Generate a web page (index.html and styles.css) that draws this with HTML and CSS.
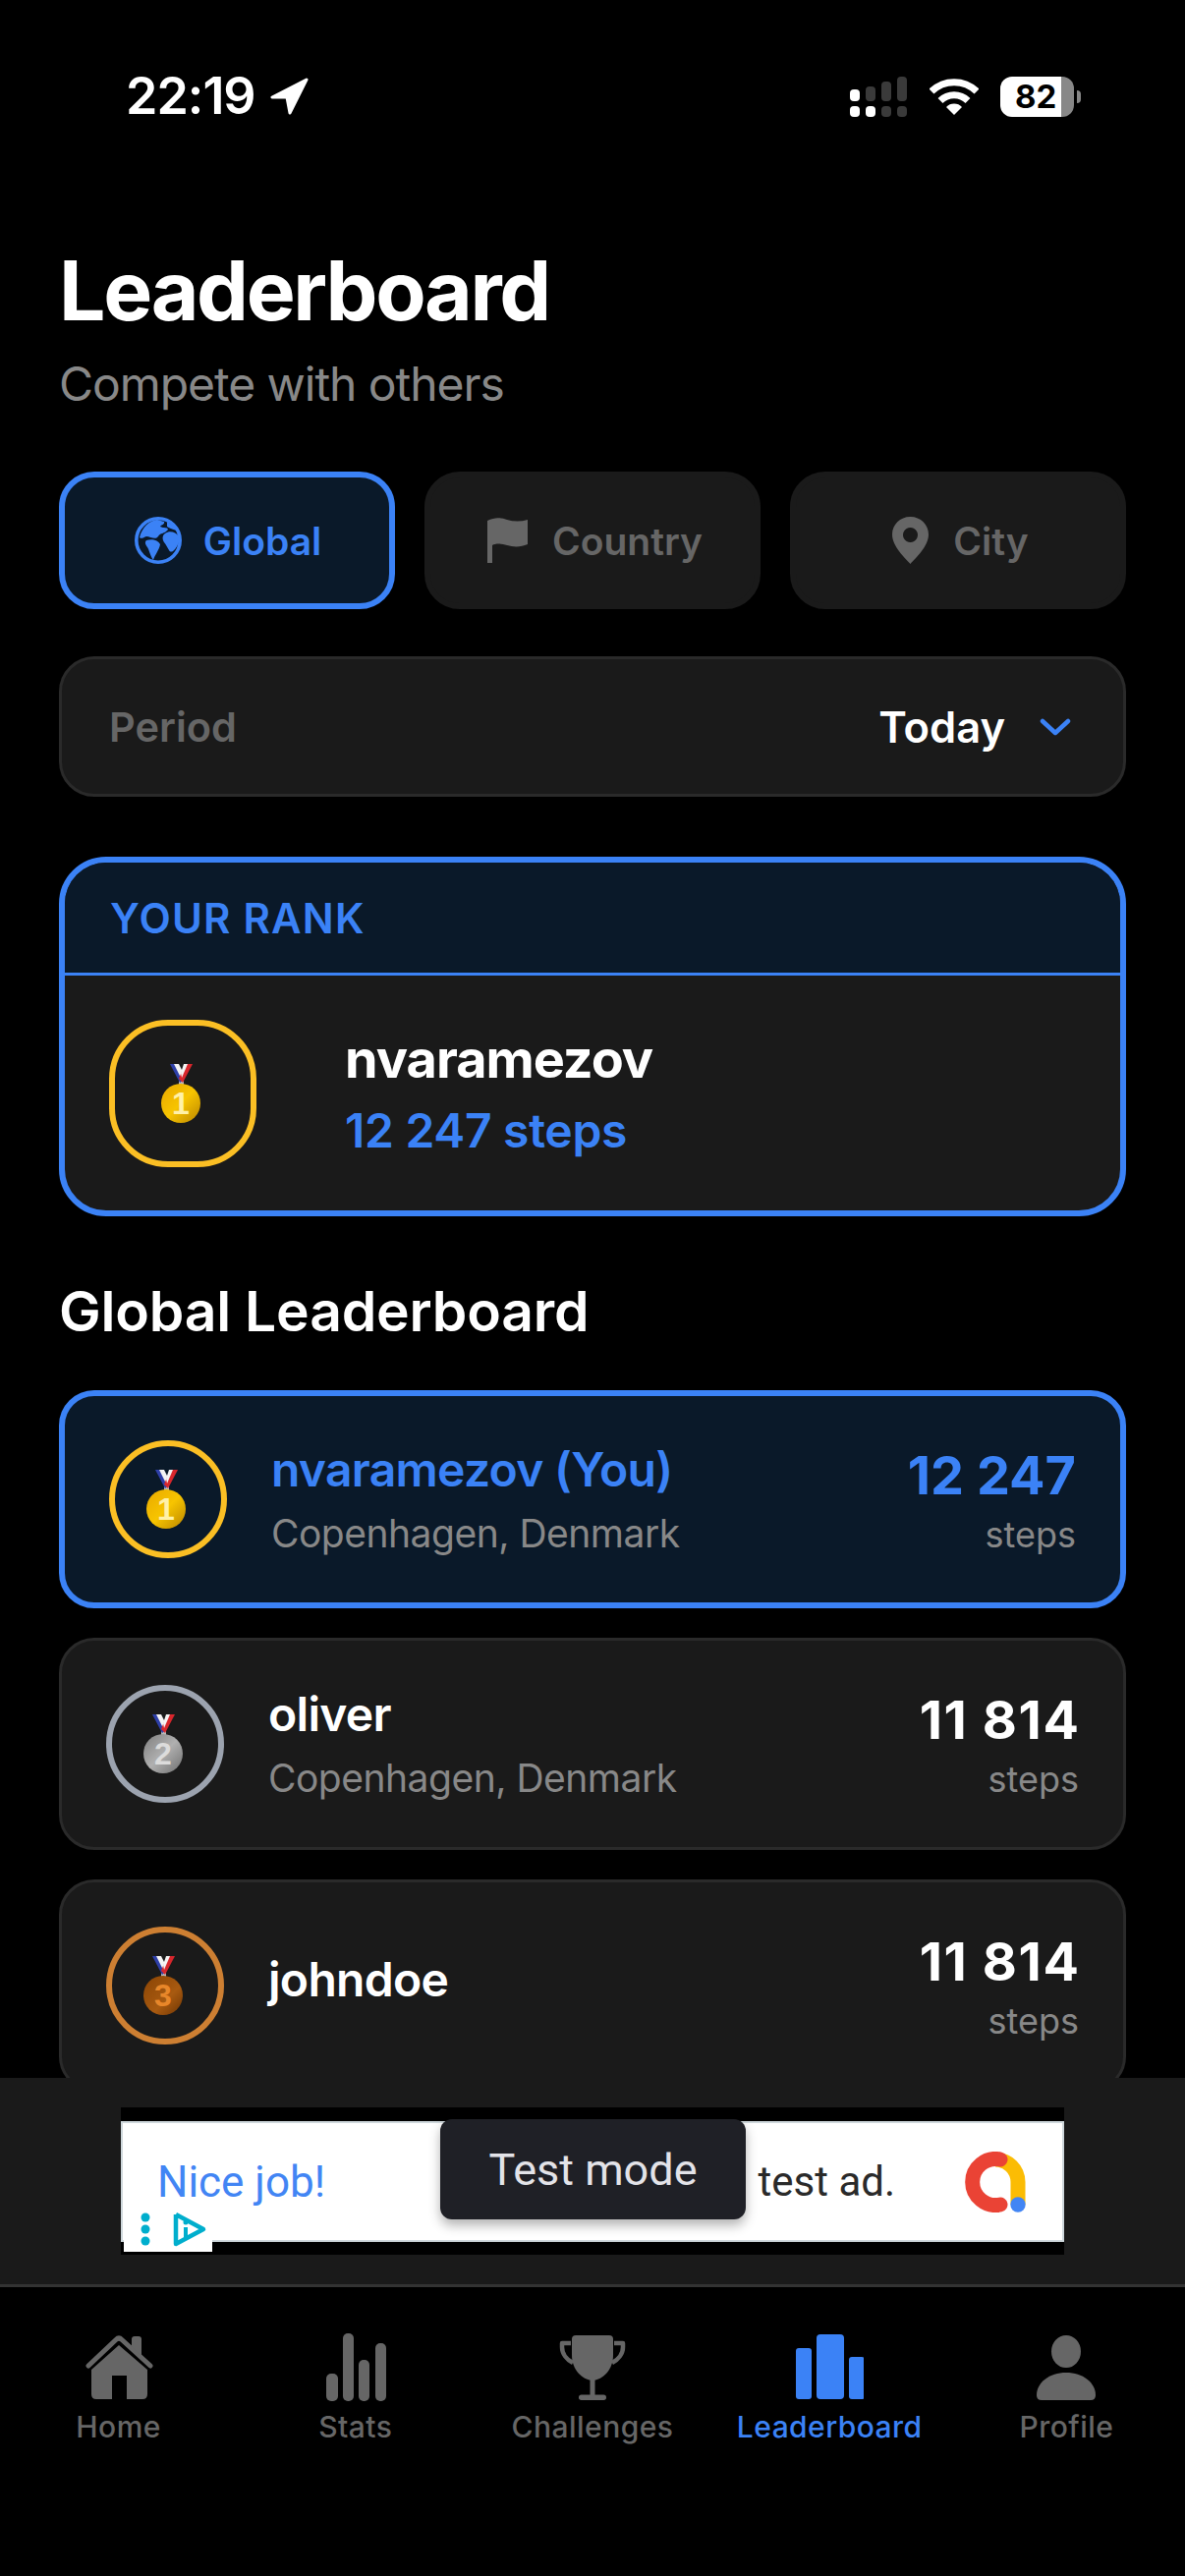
FILE: index.html
```html
<!DOCTYPE html>
<html lang="en">
<head>
<meta charset="utf-8">
<title>Leaderboard</title>
<link rel="stylesheet" href="styles.css">
</head>
<body>
<svg class="defs" width="0" height="0" aria-hidden="true">
  <defs>
    <linearGradient id="gold" x1="0" y1="0" x2="1" y2="1"><stop offset="0" stop-color="#e8a800"/><stop offset=".5" stop-color="#f7c400"/><stop offset="1" stop-color="#b98500"/></linearGradient>
    <linearGradient id="silver" x1="0" y1="0" x2="1" y2="1"><stop offset="0" stop-color="#7d7d7d"/><stop offset=".5" stop-color="#b0b0b0"/><stop offset="1" stop-color="#6e6e6e"/></linearGradient>
    <linearGradient id="bronze" x1="0" y1="0" x2="1" y2="1"><stop offset="0" stop-color="#8a4404"/><stop offset=".6" stop-color="#a85a10"/><stop offset="1" stop-color="#6f3503"/></linearGradient>
    <g id="ribbon">
      <rect x="18" y="14" width="5" height="7" fill="#b9b9b9"/>
      <polygon points="9,0 17,0 24,15 19,19" fill="#2e3fa8"/>
      <polygon points="13,0 18,0 23.500,11 21,16" fill="#f4f4f4"/>
      <polygon points="32,0 24,0 18,15 22,19" fill="#d8262c"/>
      <polygon points="27,0 23,0 20,9 21,14" fill="#f4f4f4"/>
    </g>
  </defs>
</svg>
<div class="app">
  <main class="content">
    <div class="status">
      <div class="status-left">
        <span class="time">22:19</span>
        <svg class="loc" width="40" height="38" viewBox="0 0 40 38"><path d="M38 2 L3 20 H18 L21 36 Z" fill="#fff" stroke="#fff" stroke-width="3" stroke-linejoin="round"/></svg>
      </div>
      <div class="status-right">
        <svg width="58" height="41" viewBox="0 0 58 41"><g fill="#3a3a3a"><rect x="16" y="10" width="10" height="15" rx="4"/><rect x="32" y="5" width="10" height="20" rx="4"/><rect x="48" y="0" width="10" height="25" rx="4"/><rect x="32" y="30" width="10" height="11" rx="4"/><rect x="48" y="30" width="10" height="11" rx="4"/></g><g fill="#fff"><rect x="0" y="13" width="10" height="12" rx="4"/><rect x="0" y="30" width="10" height="11" rx="4"/><rect x="16" y="30" width="10" height="11" rx="4"/></g></svg>
        <svg class="wifi" width="50" height="38" viewBox="0 0 50 38"><g fill="none" stroke="#fff" stroke-width="7"><path d="M2 14 A33 33 0 0 1 48 14"/><path d="M11 23.500 A20 20 0 0 1 39 23.500"/></g><path d="M25 38 L17 30 A11 11 0 0 1 33 30 Z" fill="#fff"/></svg>
        <div class="battery"><span class="battery-level">82</span></div>
        <span class="battery-nub"></span>
      </div>
    </div>

    <div class="page">
      <h1 class="title">Leaderboard</h1>
      <p class="subtitle">Compete with others</p>

      <div class="tabs">
        <div class="tab tab-active">
          <svg width="48" height="48" viewBox="0 0 48 48"><circle cx="24" cy="24" r="22.200" fill="#0a1929" stroke="#3b82f6" stroke-width="3.600"/><g fill="#3b82f6"><path d="M5 21 C8 10 15 4 23 3 L30 5 C31 8 27 8 26 10 C30 12 33 10 34 13 C30 18 26 16 24 20 C21 24 16 20 12 20 C9 21 7 23 5 21Z"/><path d="M12 24 C18 22 24 24 26 28 C25 34 21 38 19 44 C16 40 15 34 13 31 C11 28 10 26 12 24Z"/><path d="M31 17 C35 14 42 15 45 20 L45 26 C42 34 37 38 35 34 C33 31 32 28 30 26 C28 23 28 19 31 17Z"/><path d="M33 5 C37 7 41 10 43 14 C38 13 35 11 33 10Z"/></g></svg>
          <span>Global</span>
        </div>
        <div class="tab tab-muted">
          <svg width="41" height="46" viewBox="0 0 41 46"><path d="M0 3 C8 -1 14 0 20 2 C27 4 34 4 41 2 V27 C34 30 27 30 20 28 C14 26 8 26 5 28 V46 H0Z" fill="#666"/></svg>
          <span>Country</span>
        </div>
        <div class="tab tab-muted">
          <svg width="37" height="48" viewBox="0 0 37 48"><path fill-rule="evenodd" d="M18.500 0 C8 0 0 8 0 18 C0 30 13 42 18.500 48 C24 42 37 30 37 18 C37 8 29 0 18.500 0Z M18.500 11 A7.500 7.500 0 1 1 18.499 11Z" fill="#666"/></svg>
          <span>City</span>
        </div>
      </div>

      <div class="period">
        <span class="period-label">Period</span>
        <div class="period-value">
          <span>Today</span>
          <svg width="32" height="20" viewBox="0 0 32 20"><path d="M3 4 L16 16 L29 4" fill="none" stroke="#3b82f6" stroke-width="4.500" stroke-linecap="round" stroke-linejoin="round"/></svg>
        </div>
      </div>

      <section class="rank">
        <div class="rank-head">YOUR RANK</div>
        <div class="rank-body">
          <div class="rank-medal">
            <svg width="44" height="60" viewBox="0 0 44 60"><use href="#ribbon"/><circle cx="20" cy="40" r="20" fill="url(#gold)"/><text class="medal-digit medal-digit-gold" x="20" y="51">1</text></svg>
          </div>
          <div class="rank-info">
            <div class="rank-name">nvaramezov</div>
            <div class="rank-steps">12 247 steps</div>
          </div>
        </div>
      </section>

      <h2 class="section-title">Global Leaderboard</h2>

      <div class="rows">
        <div class="row row-you">
          <div class="ring ring-gold">
            <svg width="44" height="60" viewBox="0 0 44 60"><use href="#ribbon"/><circle cx="20" cy="40" r="20" fill="url(#gold)"/><text class="medal-digit medal-digit-gold" x="20" y="51">1</text></svg>
          </div>
          <div class="who">
            <div class="who-name who-name-you">nvaramezov (You)</div>
            <div class="who-place">Copenhagen, Denmark</div>
          </div>
          <div class="score">
            <div class="score-value score-value-you">12 247</div>
            <div class="score-unit">steps</div>
          </div>
        </div>
        <div class="row">
          <div class="ring ring-silver">
            <svg width="44" height="60" viewBox="0 0 44 60"><use href="#ribbon"/><circle cx="20" cy="40" r="20" fill="url(#silver)"/><text class="medal-digit medal-digit-silver" x="20" y="51">2</text></svg>
          </div>
          <div class="who">
            <div class="who-name">oliver</div>
            <div class="who-place">Copenhagen, Denmark</div>
          </div>
          <div class="score">
            <div class="score-value">11 814</div>
            <div class="score-unit">steps</div>
          </div>
        </div>
        <div class="row">
          <div class="ring ring-bronze">
            <svg width="44" height="60" viewBox="0 0 44 60"><use href="#ribbon"/><circle cx="20" cy="40" r="20" fill="url(#bronze)"/><text class="medal-digit medal-digit-bronze" x="20" y="51">3</text></svg>
          </div>
          <div class="who who-single">
            <div class="who-name">johndoe</div>
          </div>
          <div class="score">
            <div class="score-value">11 814</div>
            <div class="score-unit">steps</div>
          </div>
        </div>
      </div>
    </div>
  </main>

  <aside class="ad-panel">
    <div class="ad">
      <div class="creative">
        <span class="ad-headline">Nice job!</span>
        <span class="ad-text">test ad.</span>
        <svg class="ad-logo" width="62" height="62" viewBox="0 0 62 62"><path d="M31 8 A23 23 0 0 1 54 31 V54" fill="none" stroke="#fbbc04" stroke-width="15"/><path d="M36 8 A23.500 23.500 0 1 0 36 54" fill="none" stroke="#ea4335" stroke-width="15" stroke-linecap="round"/><circle cx="54" cy="54" r="7.700" fill="#4285f4"/></svg>
      </div>
      <div class="ad-badge">
        <svg width="90" height="48" viewBox="0 0 90 48"><g fill="#00aecd"><circle cx="22" cy="13" r="4.500"/><circle cx="22" cy="25" r="4.500"/><circle cx="22" cy="37" r="4.500"/></g><path d="M53 10 V40 L81 25 L53 10" fill="none" stroke="#00aecd" stroke-width="4.500" stroke-linejoin="round"/><rect x="61" y="23" width="4" height="13" fill="#00aecd"/><circle cx="63" cy="18" r="2.500" fill="#00aecd"/></svg>
      </div>
      <div class="test-mode">Test mode</div>
    </div>
  </aside>

  <nav class="nav">
    <div class="nav-item">
      <svg width="70" height="70" viewBox="0 0 70 70"><path d="M4 33 L32 6.500 Q35 3.500 38 6.500 L67 33" fill="none" stroke="#666" stroke-width="5" stroke-linecap="round" stroke-linejoin="round"/><path d="M35 12 L7 37 V62 Q7 67 12 67 H28 V43 H43 V67 H59 Q64 67 64 62 V37Z" fill="#666"/><path d="M48 13 V6 Q48 3 51 3 H55 Q58 3 58 6 V24Z" fill="#666"/></svg>
      <span>Home</span>
    </div>
    <div class="nav-item">
      <svg width="70" height="70" viewBox="0 0 70 70"><g fill="#666"><rect x="5" y="41" width="12" height="28" rx="5"/><rect x="22" y="0" width="11" height="69" rx="5"/><rect x="38" y="27" width="11" height="42" rx="5"/><rect x="55" y="10" width="11" height="59" rx="5"/></g></svg>
      <span>Stats</span>
    </div>
    <div class="nav-item">
      <svg width="70" height="70" viewBox="0 0 70 70"><path d="M13 10 H4 V14 C4 21 9 27 15 30 M57 10 H66 V14 C66 21 61 27 55 30" fill="none" stroke="#666" stroke-width="4.500" stroke-linejoin="round"/><path d="M18 2 H52 Q56 2 56 6 V22 C56 37 46 47 35 48 C24 47 14 37 14 22 V6 Q14 2 18 2Z" fill="#666"/><rect x="32.500" y="47" width="5" height="17" fill="#666"/><rect x="21" y="62.500" width="28" height="5.500" rx="2.700" fill="#666"/></svg>
      <span>Challenges</span>
    </div>
    <div class="nav-item nav-item-active">
      <svg width="70" height="70" viewBox="0 0 70 70"><g fill="#3b82f6"><rect x="1" y="15" width="16" height="52" rx="3"/><rect x="22" y="1" width="28" height="66" rx="4"/><rect x="55" y="24" width="16" height="43" rx="3"/></g></svg>
      <span>Leaderboard</span>
    </div>
    <div class="nav-item">
      <svg width="70" height="70" viewBox="0 0 70 70"><ellipse cx="35" cy="18.500" rx="15" ry="16.500" fill="#666"/><path d="M5 63 C5 50 18 40 35 40 S65 50 65 63 Q65 68 60 68 H10 Q5 68 5 63Z" fill="#666"/></svg>
      <span>Profile</span>
    </div>
  </nav>
</div>
</body>
</html>
```

FILE: styles.css
```css
* { box-sizing: border-box; }

html, body {
  margin: 0;
  padding: 0;
  background: #000;
}

.defs { position: absolute; }

.app {
  width: 1206px;
  height: 2622px;
  display: flex;
  flex-direction: column;
  background: #000;
  color: #fff;
  font-family: Inter, "Liberation Sans", sans-serif;
  overflow: hidden;
}

.content {
  flex: 1;
  min-height: 0;
  overflow: hidden;
}

/* Status bar */
.status {
  height: 196px;
  padding: 0 113px 0 128px;
  display: flex;
  align-items: center;
  justify-content: space-between;
}

.status-left {
  display: flex;
  align-items: center;
  gap: 14px;
}

.time {
  font-size: 52px;
  font-weight: 600;
  line-height: 60px;
  letter-spacing: -1px;
}

.status-right {
  display: flex;
  align-items: center;
}

.wifi { margin-left: 23px; }

.battery {
  width: 75px;
  height: 41px;
  margin-left: 22px;
  padding-left: 15px;
  border-radius: 12px;
  background: linear-gradient(to right, #fff 62px, #888 62px);
  display: flex;
  align-items: center;
}

.battery-level {
  color: #000;
  font-size: 33px;
  font-weight: 700;
  line-height: 41px;
}

.battery-nub {
  width: 4px;
  height: 13px;
  margin-left: 3px;
  margin-right: -7px;
  border-radius: 0 6px 6px 0;
  background: #888;
}

/* Page */
.page { padding: 50px 60px 0; }

.title {
  margin: 0 0 15px;
  font-size: 84px;
  font-weight: 700;
  line-height: 100px;
  letter-spacing: -2.350px;
}

.subtitle {
  margin: 0 0 59px;
  color: #888;
  font-size: 48px;
  line-height: 60px;
  letter-spacing: -1.050px;
}

/* Tabs */
.tabs {
  display: grid;
  grid-template-columns: repeat(3, 1fr);
  gap: 30px;
  margin-bottom: 48px;
}

.tab {
  height: 140px;
  padding-left: 2px;
  display: flex;
  align-items: center;
  justify-content: center;
  gap: 22px;
  border: 6px solid #1a1a1a;
  border-radius: 36px;
  background: #1a1a1a;
  color: #666;
  font-size: 39px;
  font-weight: 600;
}

.tab-muted {
  padding-left: 5px;
  gap: 25px;
}

.tab-active {
  border-color: #3b82f6;
  background: #0a1929;
  color: #3b82f6;
}

/* Period */
.period {
  height: 143px;
  margin-bottom: 61px;
  padding: 0 53px 0 48px;
  display: flex;
  align-items: center;
  justify-content: space-between;
  border: 3px solid #2a2a2a;
  border-radius: 36px;
  background: #1a1a1a;
}

.period-label {
  color: #666;
  font-size: 41.500px;
  font-weight: 600;
}

.period-value {
  display: flex;
  align-items: center;
  gap: 35px;
  font-size: 43.500px;
  font-weight: 600;
}

/* Your rank */
.rank {
  height: 366px;
  margin-bottom: 62px;
  border: 6px solid #3b82f6;
  border-radius: 48px;
  background: #1a1a1a;
  overflow: hidden;
}

.rank-head {
  height: 115px;
  padding: 0 46px;
  display: flex;
  align-items: center;
  border-bottom: 3px solid #3b82f6;
  background: #0a1929;
  color: #3b82f6;
  font-size: 42px;
  font-weight: 600;
  letter-spacing: 1.200px;
}

.rank-body {
  height: 239px;
  padding: 0 45px;
  display: flex;
  align-items: center;
  gap: 90px;
}

.rank-medal {
  width: 150px;
  height: 150px;
  display: flex;
  align-items: center;
  justify-content: center;
  border: 6px solid #fbbf24;
  border-radius: 60px;
}

.rank-info { padding-top: 3px; }

.rank-name {
  font-size: 54px;
  font-weight: 700;
  line-height: 70px;
  letter-spacing: -1px;
}

.rank-steps {
  margin-top: 3px;
  color: #3b82f6;
  font-size: 48px;
  font-weight: 600;
  line-height: 70px;
  letter-spacing: -0.300px;
}

.section-title {
  margin: 0 0 45px;
  font-size: 57px;
  font-weight: 600;
  line-height: 70px;
  letter-spacing: -0.200px;
}

/* Rows */
.rows {
  display: flex;
  flex-direction: column;
  gap: 30px;
}

.row {
  display: flex;
  align-items: center;
  gap: 45px;
  padding: 45px;
  border: 3px solid #2a2a2a;
  border-radius: 36px;
  background: #1a1a1a;
}

.row-you {
  border: 6px solid #3b82f6;
  background: #0a1929;
}

.ring {
  flex: none;
  width: 120px;
  height: 120px;
  display: flex;
  align-items: center;
  justify-content: center;
  border: 6px solid;
  border-radius: 50%;
}

.ring-gold { border-color: #fbbf24; }
.ring-silver { border-color: #9ca3af; }
.ring-bronze { border-color: #cd7f32; }

.medal-digit {
  font-family: "Liberation Sans", sans-serif;
  font-size: 32px;
  font-weight: 700;
  text-anchor: middle;
}

.medal-digit-gold { fill: #fff1a8; }
.medal-digit-silver { fill: #dcdcdc; }
.medal-digit-bronze { fill: #e8872a; }

.who { flex: 1; min-width: 0; }

.who-single { padding-bottom: 13px; }

.who-name {
  font-size: 48px;
  font-weight: 600;
  line-height: 60px;
  letter-spacing: -0.700px;
}

.who-name-you { color: #3b82f6; }

.who-place {
  margin-top: 9px;
  color: #888;
  font-size: 39px;
  line-height: 51px;
  letter-spacing: -0.500px;
}

.score { text-align: right; }

.score-value {
  padding-top: 3px;
  margin-right: -1.600px;
  font-size: 54px;
  font-weight: 700;
  line-height: 66px;
  letter-spacing: 1.600px;
}

.score-value-you {
  margin-right: 0;
  color: #3b82f6;
  letter-spacing: 0;
}

.score-unit {
  margin-top: 3px;
  color: #888;
  font-size: 36px;
  line-height: 48px;
}

/* Ad */
.ad-panel {
  flex: none;
  height: 210px;
  display: flex;
  align-items: center;
  justify-content: center;
  background: #1a1a1a;
}

.ad {
  position: relative;
  width: 960px;
  height: 150px;
  padding-top: 14px;
  background: #000;
  font-family: Roboto, "Liberation Sans", sans-serif;
}

.creative {
  height: 123px;
  padding: 0 37px 0 35px;
  display: flex;
  align-items: center;
  border: 2px solid #cfd8dc;
  background: #fff;
}

.ad-headline {
  color: #4285f4;
  font-size: 44px;
}

.ad-text {
  margin-left: auto;
  margin-right: 71px;
  color: #2a2a2a;
  font-size: 42px;
}

.ad-badge {
  position: absolute;
  left: 3px;
  bottom: 3px;
  width: 90px;
  height: 48px;
  background: #fff;
}

.test-mode {
  position: absolute;
  left: 325px;
  top: 12px;
  width: 311px;
  height: 102px;
  display: flex;
  align-items: center;
  justify-content: center;
  border-radius: 12px;
  background: #1f2026;
  box-shadow: 0 6px 12px rgba(0, 0, 0, .3);
  color: #e3e3e8;
  font-size: 45px;
}

/* Nav */
.nav {
  flex: none;
  height: 297px;
  padding: 47px 0 0;
  display: grid;
  grid-template-columns: repeat(5, 1fr);
  align-items: start;
  border-top: 3px solid #333;
  background: #000;
}

.nav-item {
  display: flex;
  flex-direction: column;
  align-items: center;
  gap: 5px;
  color: #666;
  font-size: 30px;
  font-weight: 500;
  line-height: 40px;
  letter-spacing: 0.450px;
}

.nav-item-active { color: #3b82f6; }
```
